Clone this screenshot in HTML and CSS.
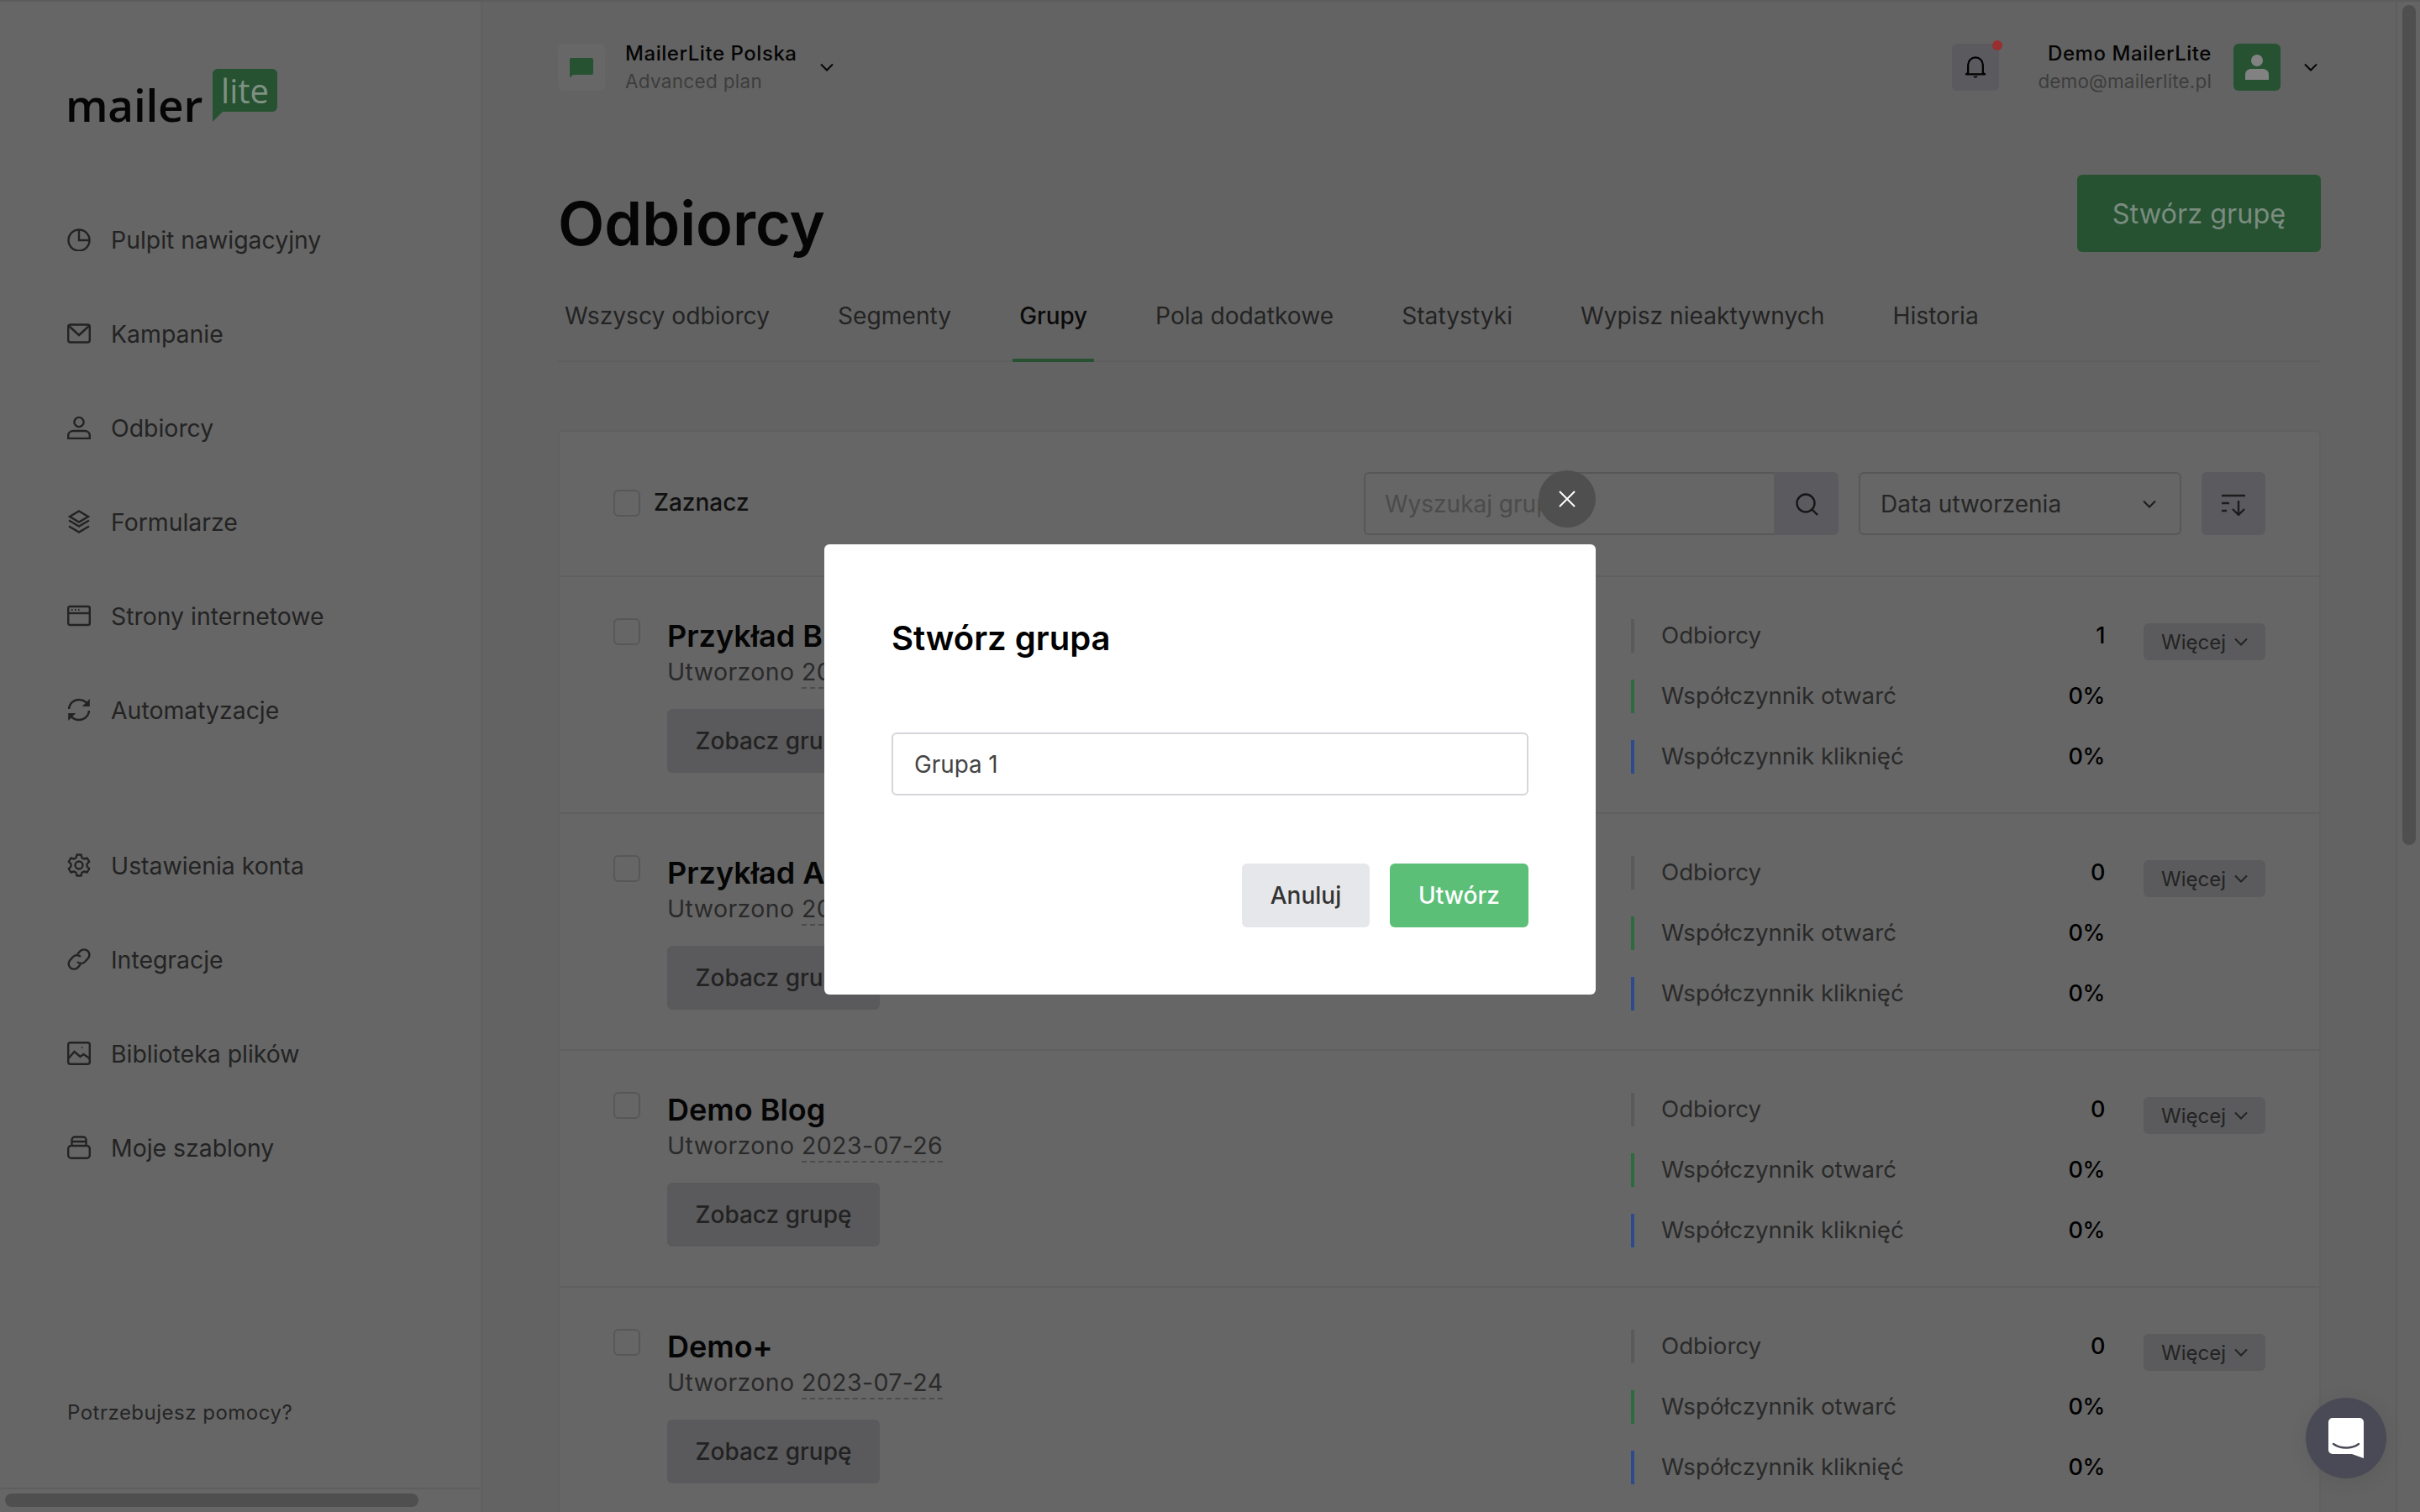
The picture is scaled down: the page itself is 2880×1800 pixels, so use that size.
FILE: index.html
```html
<!DOCTYPE html>
<html lang="pl">
<head>
<meta charset="utf-8">
<title>Odbiorcy</title>
<link rel="stylesheet" href="styles.css">
</head>
<body>
<svg class="defs" width="0" height="0">
  <symbol id="chev" viewBox="0 0 16 10"><path d="M1 1.500l7 7 7-7" fill="none" stroke="currentColor" stroke-width="2"/></symbol>
</svg>
<div class="app">
  <aside class="sidebar">
    <div class="logo">
      <span class="logo-word">mailer</span>
      <span class="logo-bubble">lite</span>
    </div>
    <nav class="nav">
      <a class="nav-item"><svg class="nav-icon" viewBox="0 0 28 28"><circle cx="14" cy="15" r="12.500"/><path d="M14 2.500V15h12.500"/></svg>Pulpit nawigacyjny</a>
      <a class="nav-item"><svg class="nav-icon" viewBox="0 0 28 28"><rect x="1.200" y="3.500" width="25.600" height="21" rx="2.500"/><path d="M2 5l12 11L26 5"/></svg>Kampanie</a>
      <a class="nav-item"><svg class="nav-icon" viewBox="0 0 28 28"><circle cx="14" cy="7.500" r="5.600"/><path d="M1.200 27v-3.500c0-3.500 3-5.500 6-5.500h13.600c3 0 6 2 6 5.500V27z"/></svg>Odbiorcy</a>
      <a class="nav-item"><svg class="nav-icon" viewBox="0 0 28 28"><path d="M14 1.500l11 6.500-11 6.500L3 8z"/><path d="M2 12.500l12 7 12-7M2 19.500l12 7 12-7"/></svg>Formularze</a>
      <a class="nav-item"><svg class="nav-icon" viewBox="0 0 28 28"><rect x="1.200" y="3" width="25.600" height="22" rx="2"/><path d="M1.200 11h25.600"/><path class="nav-dots" d="M5 7h1.500M9 7h1.500M13 7h1.500"/></svg>Strony internetowe</a>
      <a class="nav-item"><svg class="nav-icon" viewBox="0 0 28 28"><path d="M2 13C2.500 6.500 7.500 2 14 2c4.500 0 8 2 10.500 5.500"/><path d="M26 15c-.5 6.500-5.500 11-12 11-4.500 0-8-2-10.500-5.500"/><path class="nav-fill" d="M26.800 1v9h-9zM1.200 27v-9h9z"/></svg>Automatyzacje</a>
    </nav>
    <nav class="nav nav-second">
      <a class="nav-item"><svg class="nav-icon" viewBox="0 0 28 28"><circle cx="14" cy="14" r="4.500"/><path d="M11.500 1.500h5l1 3.700 2.500 1.300 3.700-1 2.500 4.300-2.700 2.700v3l2.700 2.700-2.500 4.300-3.700-1-2.500 1.300-1 3.700h-5l-1-3.700-2.500-1.300-3.700 1-2.500-4.300 2.700-2.700v-3L1.800 9.800l2.500-4.300 3.700 1 2.500-1.300z" stroke-linejoin="round"/></svg>Ustawienia konta</a>
      <a class="nav-item"><svg class="nav-icon" viewBox="0 0 28 28"><path d="M12 8l3.500-3.800a6.300 6.300 0 0 1 9 9L21 17a6.300 6.300 0 0 1-9 0"/><path d="M16 20l-3.500 3.800a6.300 6.300 0 0 1-9-9L7 11a6.300 6.300 0 0 1 9 0"/></svg>Integracje</a>
      <a class="nav-item"><svg class="nav-icon" viewBox="0 0 28 28"><rect x="1.200" y="1.200" width="25.600" height="25.600" rx="2.500"/><path d="M1.500 20l7-8 7 6 4-3 7 5"/><path class="nav-dots" d="M17 7h1.200"/></svg>Biblioteka plików</a>
      <a class="nav-item"><svg class="nav-icon" viewBox="0 0 28 28"><path d="M5.500 12V5a3.500 3.500 0 0 1 3.500-3.500h10A3.500 3.500 0 0 1 22.500 5v7M6 7h16"/><rect x="1.200" y="12" width="25.600" height="14.800" rx="3.500"/></svg>Moje szablony</a>
    </nav>
    <p class="help">Potrzebujesz pomocy?</p>
    <div class="side-scroll"><div class="side-thumb"></div></div>
  </aside>

  <main class="main">
    <header class="topbar">
      <div class="org-icon"><svg viewBox="0 0 28 24" width="28" height="24"><path d="M2 1h24a2 2 0 0 1 2 2v16a2 2 0 0 1-2 2H4l-4 3.500V3a2 2 0 0 1 2-2z" fill="#265232"/></svg></div>
      <div class="org-text">
        <div class="org-name">MailerLite Polska</div>
        <div class="org-plan">Advanced plan</div>
      </div>
      <svg class="top-chev"><use href="#chev"/></svg>
      <div class="bell">
        <svg viewBox="0 0 28 32" width="26" height="30"><path d="M4.500 23V13a9.500 9.500 0 0 1 19 0v10l2.500 2H2z" fill="none" stroke="#000" stroke-width="2.400" stroke-linejoin="round"/><path d="M11 27.500c1 2.500 5 2.500 6 0z" fill="#000"/></svg>
        <span class="bell-dot"></span>
      </div>
      <div class="user-text">
        <div class="user-name">Demo MailerLite</div>
        <div class="user-mail">demo@mailerlite.pl</div>
      </div>
      <div class="avatar"><svg viewBox="0 0 28 32" width="30" height="32"><circle cx="14" cy="8" r="7" fill="#828282"/><path d="M0 31v-6c0-5 4-7 7-7h14c3 0 7 2 7 7v6z" fill="#828282"/></svg></div>
      <svg class="top-chev user-chev"><use href="#chev"/></svg>
    </header>

    <div class="title-row">
      <h1 class="title">Odbiorcy</h1>
      <button class="btn-create">Stwórz grupę</button>
    </div>

    <div class="tabs">
      <a class="tab">Wszyscy odbiorcy</a>
      <a class="tab">Segmenty</a>
      <a class="tab tab-active">Grupy</a>
      <a class="tab">Pola dodatkowe</a>
      <a class="tab">Statystyki</a>
      <a class="tab">Wypisz nieaktywnych</a>
      <a class="tab">Historia</a>
    </div>

    <section class="card">
      <div class="card-head">
        <span class="check"></span>
        <span class="select-all">Zaznacz</span>
        <div class="search">
          <span class="search-input">Wyszukaj grupę</span>
          <span class="search-btn"><svg viewBox="0 0 28 28" width="28" height="28"><circle cx="13" cy="13" r="10.500" fill="none" stroke="#161616" stroke-width="2.400"/><path d="M20.500 20.500L27 27" stroke="#161616" stroke-width="2.400"/></svg></span>
        </div>
        <div class="sort-select">Data utworzenia<svg class="sel-chev"><use href="#chev"/></svg></div>
        <span class="sort-btn"><svg viewBox="0 0 28 28" width="28" height="28" fill="none" stroke="#1c1c1c" stroke-width="2.400"><path d="M0 4h28M0 13h9M0 22h6M20 10v17M13 20l7 7 7-7"/></svg></span>
      </div>

      <article class="row">
        <span class="check"></span>
        <div class="info">
          <div class="name">Przykład B</div>
          <div class="sub">Utworzono <span class="date">2023-07-27</span></div>
          <button class="btn-view">Zobacz grupę</button>
        </div>
        <div class="stats">
          <div class="stat stat-grey"><span>Odbiorcy</span><b>1</b></div>
          <div class="stat stat-green"><span>Współczynnik otwarć</span><b>0%</b></div>
          <div class="stat stat-blue"><span>Współczynnik kliknięć</span><b>0%</b></div>
        </div>
        <button class="btn-more">Więcej<svg class="more-chev"><use href="#chev"/></svg></button>
      </article>

      <article class="row">
        <span class="check"></span>
        <div class="info">
          <div class="name">Przykład A</div>
          <div class="sub">Utworzono <span class="date">2023-07-27</span></div>
          <button class="btn-view">Zobacz grupę</button>
        </div>
        <div class="stats">
          <div class="stat stat-grey"><span>Odbiorcy</span><b>0</b></div>
          <div class="stat stat-green"><span>Współczynnik otwarć</span><b>0%</b></div>
          <div class="stat stat-blue"><span>Współczynnik kliknięć</span><b>0%</b></div>
        </div>
        <button class="btn-more">Więcej<svg class="more-chev"><use href="#chev"/></svg></button>
      </article>

      <article class="row">
        <span class="check"></span>
        <div class="info">
          <div class="name">Demo Blog</div>
          <div class="sub">Utworzono <span class="date">2023-07-26</span></div>
          <button class="btn-view">Zobacz grupę</button>
        </div>
        <div class="stats">
          <div class="stat stat-grey"><span>Odbiorcy</span><b>0</b></div>
          <div class="stat stat-green"><span>Współczynnik otwarć</span><b>0%</b></div>
          <div class="stat stat-blue"><span>Współczynnik kliknięć</span><b>0%</b></div>
        </div>
        <button class="btn-more">Więcej<svg class="more-chev"><use href="#chev"/></svg></button>
      </article>

      <article class="row">
        <span class="check"></span>
        <div class="info">
          <div class="name">Demo+</div>
          <div class="sub">Utworzono <span class="date">2023-07-24</span></div>
          <button class="btn-view">Zobacz grupę</button>
        </div>
        <div class="stats">
          <div class="stat stat-grey"><span>Odbiorcy</span><b>0</b></div>
          <div class="stat stat-green"><span>Współczynnik otwarć</span><b>0%</b></div>
          <div class="stat stat-blue"><span>Współczynnik kliknięć</span><b>0%</b></div>
        </div>
        <button class="btn-more">Więcej<svg class="more-chev"><use href="#chev"/></svg></button>
      </article>
    </section>
  </main>

  <div class="page-scroll"><div class="page-thumb"></div></div>
</div>

<div class="modal">
  <h2 class="modal-title">Stwórz grupa</h2>
  <div class="modal-input">Grupa 1</div>
  <div class="modal-actions">
    <button class="btn-cancel">Anuluj</button>
    <button class="btn-submit">Utwórz</button>
  </div>
</div>
<button class="modal-close"><svg viewBox="0 0 20 20" width="20" height="20"><path d="M1 1l18 18M19 1L1 19" stroke="#fff" stroke-width="2"/></svg></button>

<div class="chat"><svg viewBox="0 0 42 48" width="42" height="48"><path d="M5 0h32a5 5 0 0 1 5 5v43l-14-5H5a5 5 0 0 1-5-5V5a5 5 0 0 1 5-5z" fill="#fff"/><path d="M6 31c8 6 22 6 30 0" fill="none" stroke="#4a4a56" stroke-width="2.400" stroke-linecap="round"/></svg></div>
</body>
</html>
```
FILE: styles.css
```css
* { box-sizing: border-box; }
html, body { margin: 0; height: 100%; overflow: hidden; }
body { font-family: Inter, "Liberation Sans", sans-serif; background: #636363; color: #222; position: relative; }
.defs { position: absolute; }
button { font-family: inherit; border: 0; padding: 0; }
.app { display: flex; width: 2880px; height: 1800px; border-top: 2px solid #5c5c5c; overflow: hidden; }

/* sidebar */
.sidebar { width: 574px; flex: none; height: 100%; background: #666; border-right: 2px solid #606060; display: flex; flex-direction: column; padding-top: 80px; }
.logo { height: 63px; margin: 0 0 84px 78px; display: flex; align-items: flex-start; position: relative; }
.logo-word { font-family: "Open Sans", sans-serif; font-weight: 600; font-size: 53px; line-height: 63px; color: #050505; padding-top: 11px; letter-spacing: -.2px; width: 175px; }
.logo-bubble { position: relative; width: 77px; height: 51px; background: #265232; border-radius: 6px 6px 6px 0; color: #7f9184; font-family: "Open Sans", sans-serif; font-size: 40px; font-weight: 500; line-height: 52px; text-align: center; }
.logo-bubble::after { content: ""; position: absolute; left: 0; top: 51px; border-top: 12px solid #265232; border-right: 12px solid transparent; }
.nav { display: flex; flex-direction: column; }
.nav-second { margin-top: 73px; }
.nav-item { height: 112px; padding-left: 80px; display: flex; align-items: center; gap: 24px; font-size: 28.400px; color: #232323; }
.nav-icon { width: 28px; height: 28px; flex: none; fill: none; stroke: #232323; stroke-width: 2.400; }
.nav-fill { fill: #232323; stroke: none; }
.nav-dots { stroke-width: 2; }
.help { margin: auto 0 69px 80px; font-size: 24px; line-height: 40px; letter-spacing: .5px; color: #252525; }
.side-scroll { height: 29px; border-top: 2px solid #5e5e5e; padding: 5px 0 0 6px; flex: none; }
.side-thumb { width: 492px; height: 16px; background: #4f4f4f; border-radius: 8px; }

/* main */
.main { flex: 1; min-width: 0; padding: 50px 89px 0 90px; }
.topbar { display: flex; align-items: center; height: 56px; }
.org-icon { width: 56px; height: 56px; background: #676767; border-radius: 6px; display: flex; align-items: center; justify-content: center; }
.org-text { margin-left: 24px; }
.org-name, .user-name { font-size: 24px; font-weight: 500; line-height: 33px; letter-spacing: .55px; color: #050505; }
.org-plan { font-size: 22.500px; line-height: 33px; letter-spacing: .3px; color: #3d3d3d; }
.user-mail { font-size: 22.500px; line-height: 33px; letter-spacing: .15px; color: #3d3d3d; }
.top-chev { width: 16px; height: 10px; color: #050505; margin-left: 27px; margin-right: auto; }
.bell { width: 56px; height: 56px; background: #5b5b5f; border-radius: 6px; position: relative; display: flex; align-items: center; justify-content: center; }
.bell-dot { position: absolute; right: -4px; top: -4px; width: 12px; height: 12px; border-radius: 50%; background: #9a2f2f; }
.user-text { margin-left: 46px; text-align: right; }
.avatar { width: 56px; height: 56px; margin-left: 26px; background: #265232; border-radius: 6px; display: flex; align-items: center; justify-content: center; }
.user-chev { margin: 0 4px 0 28px; }
.title-row { display: flex; justify-content: space-between; align-items: flex-start; margin-top: 100px; height: 92px; }
.title { margin: 12px 0 0; font-size: 72px; font-weight: 600; line-height: 92px; color: #050505; }
.btn-create { width: 290px; height: 92px; border-radius: 6px; background: #265232; color: #7a8c7f; font-size: 32.400px; }
.tabs { display: flex; gap: 65px; margin-top: 40px; height: 91px; border-bottom: 2px solid #5e5e5e; }
.tab { padding: 16px 8px 0; height: 91px; font-size: 28.200px; line-height: 40px; color: #232323; }
.tab-active { color: #0a0a0a; font-size: 27.800px; font-weight: 500; border-bottom: 4px solid #265232; }

/* card */
.card { margin-top: 81px; width: 2098px; background: #666; border: 2px solid #606060; border-radius: 6px 6px 0 0; }
.card-head { height: 173px; padding: 48px 64px 0 64px; display: flex; align-items: flex-start; border-bottom: 2px solid #5f5f5f; }
.check { width: 32px; height: 32px; flex: none; border: 2px solid #575757; border-radius: 6px; margin-top: 21px; }
.select-all { margin: 14px 0 0 16px; font-size: 28px; line-height: 44px; font-weight: 500; color: #111; }
.search { margin-left: auto; display: flex; height: 75px; }
.search-input { width: 488px; height: 75px; border: 2px solid #575757; border-right: 0; border-radius: 6px 0 0 6px; padding-left: 23px; font-size: 28px; line-height: 73px; color: #4b4b4b; }
.search-btn { width: 77px; height: 75px; background: #5b5b5f; border-radius: 0 6px 6px 0; display: flex; align-items: center; justify-content: center; }
.sort-select { width: 384px; height: 75px; margin-left: 24px; border: 2px solid #575757; border-radius: 6px; padding-left: 24px; font-size: 28px; line-height: 73px; color: #262626; position: relative; }
.sel-chev { position: absolute; right: 28px; top: 31px; width: 16px; height: 10px; color: #1a1a1a; }
.sort-btn { width: 76px; height: 75px; margin-left: 24px; background: #5b5b5f; border-radius: 6px; display: flex; align-items: center; justify-content: center; }
.row { height: 282px; padding: 49px 64px 0 64px; display: flex; align-items: flex-start; border-bottom: 2px solid #5f5f5f; }
.row .check { margin-top: 0; }
.info { margin-left: 32px; }
.name { font-size: 36px; font-weight: 600; line-height: 42px; margin-bottom: 2px; color: #050505; }
.sub { font-size: 28.500px; line-height: 40px; letter-spacing: .4px; color: #2a2a2a; }
.date { border-bottom: 2px dashed #4c4c4c; padding-bottom: 1px; }
.btn-view { display: block; margin-top: 24px; width: 253px; height: 76px; background: #5a5a5c; border-radius: 6px; font-size: 28px; font-weight: 500; color: #222; }
.stats { margin-left: auto; width: 564px; padding-top: 1px; display: flex; flex-direction: column; gap: 32px; }
.stat { height: 40px; display: flex; align-items: center; justify-content: space-between; border-left: 4px solid; padding: 0 0 2px 32px; font-size: 27.700px; color: #2a2a2a; }
.stat b { font-size: 27px; font-weight: 500; letter-spacing: -.4px; color: #000; }
.stat-grey { border-color: #5a5a5a; }
.stat-green { border-color: #2d6a3e; }
.stat-blue { border-color: #2c4a8c; }
.btn-more { margin: 6px 0 0 46px; width: 145px; height: 44px; flex: none; background: #5b5b5d; border-radius: 6px; font-size: 24px; color: #232323; display: flex; align-items: center; justify-content: center; gap: 10px; }
.more-chev { width: 16px; height: 10px; }

/* scrollbar */
.page-scroll { width: 29px; flex: none; height: 100%; border-left: 2px solid #5e5e5e; padding: 4px 0 0 6px; background: #646464; }
.page-thumb { width: 16px; height: 1000px; background: #4f4f4f; border-radius: 8px; }

/* modal */
.modal { position: absolute; left: 981px; top: 648px; width: 918px; height: 536px; background: #fff; border-radius: 6px; padding: 80px; }
.modal-title { margin: 2px 0 0; font-size: 40px; line-height: 60px; font-weight: 600; color: #000; }
.modal-input { margin-top: 82px; height: 75px; border: 2px solid #d5d6dc; border-radius: 6px; padding-left: 25px; font-size: 27.800px; line-height: 73px; color: #444; }
.modal-actions { margin-top: 81px; display: flex; justify-content: flex-end; gap: 24px; }
.btn-cancel { width: 152px; height: 76px; background: #e6e7eb; border-radius: 6px; font-size: 28px; font-weight: 500; color: #333; }
.btn-submit { width: 165px; height: 76px; background: #5cbf78; border-radius: 6px; font-size: 28px; font-weight: 500; color: #fff; }
.modal-close { position: absolute; left: 1831px; top: 560px; width: 68px; height: 68px; border-radius: 50%; background: #4f4f4f; display: flex; align-items: center; justify-content: center; }
.chat { position: absolute; left: 2744px; top: 1664px; width: 96px; height: 96px; border-radius: 50%; background: #4a4a56; box-shadow: 0 4px 24px rgba(0,0,0,.08); display: flex; align-items: center; justify-content: center; }
```
